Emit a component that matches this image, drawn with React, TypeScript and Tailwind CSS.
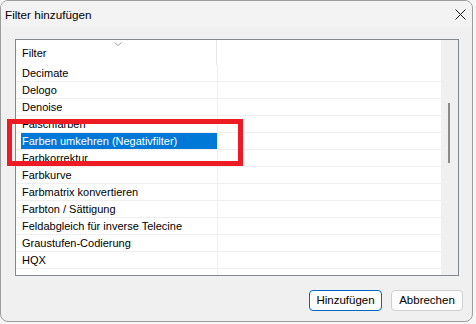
import React from 'react';

const rows = [
  'Decimate',
  'Delogo',
  'Denoise',
  'Falschfarben',
  'Farben umkehren (Negativfilter)',
  'Farbkorrektur',
  'Farbkurve',
  'Farbmatrix konvertieren',
  'Farbton / Sättigung',
  'Feldabgleich für inverse Telecine',
  'Graustufen-Codierung',
  'HQX',
  '',
];

const SELECTED = 4;

export default function App() {
  return (
    <div
      className="relative w-[476px] h-[324px] bg-[#f6f6f6] text-[11px] text-black overflow-hidden"
      style={{ fontFamily: '"Liberation Sans", Arial, sans-serif' }}
    >
      <div className="w-[473px] h-[322px] rounded-[8px] border border-[#9c9c9c] bg-[#f0f0f0] flex flex-col overflow-hidden">
        {/* title bar */}
        <div className="h-[25px] shrink-0 bg-[#f3f3f3] flex items-center justify-between pl-[4px] pr-[6px]">
          <span className="leading-none pt-[2px] text-[11.7px]">Filter hinzufügen</span>
          <svg width="11" height="11" viewBox="0 0 11 11" className="mt-[1px]">
            <path d="M0.5 0.5 L10.5 10.5 M10.5 0.5 L0.5 10.5" stroke="#1a1a1a" strokeWidth="1" />
          </svg>
        </div>

        {/* list */}
        <div className="ml-[14px] mt-[13px] w-[444px] h-[237px] border border-[#828790] bg-white flex">
          <div className="w-[425px] flex flex-col overflow-hidden">
            <div className="h-[25px] shrink-0 flex relative">
              <div className="w-[201px] border-r border-[#e5e5e5] flex items-center pl-[6px] pt-[1px]">Filter</div>
              <svg width="8" height="4" viewBox="0 0 8 4" className="absolute left-[98px] top-[2px]">
                <path d="M0.5 0.5 L4 3.5 L7.5 0.5" fill="none" stroke="#8a8a8a" strokeWidth="0.8" />
              </svg>
            </div>
            {rows.map((r, i) => (
              <div key={i} className="h-[17px] shrink-0 flex border-b border-[#efefef]">
                <div className="w-[202px] border-r border-[#efefef] pl-[5px] flex">
                  <div
                    className={
                      i === SELECTED
                        ? 'bg-[#0078d7] text-white w-full pl-[1px] pt-[1px] leading-[15px] whitespace-nowrap'
                        : 'pl-[1px] pt-[1px] leading-[15px] whitespace-nowrap'
                    }
                  >
                    {r}
                  </div>
                </div>
              </div>
            ))}
          </div>
          <div className="w-[17px] bg-[#f0f0f0] flex justify-center pt-[63px]">
            <div className="w-[2px] h-[60px] bg-[#8b8b8b] ml-[-1px]" />
          </div>
        </div>

        {/* buttons */}
        <div className="flex justify-end gap-[9px] pr-[9px] mt-[14px]">
          <button className="w-[73px] h-[21px] rounded-[4px] border border-[#0067c0] bg-[#fdfdfd] leading-none text-[11.5px]">
            Hinzufügen
          </button>
          <button className="w-[72px] h-[21px] rounded-[4px] border border-[#d0d0d0] bg-[#fdfdfd] leading-none text-[11.5px]">
            Abbrechen
          </button>
        </div>
      </div>

      {/* red annotation */}
      <div className="absolute left-[7px] top-[119px] w-[236px] h-[47px] border-[5px] border-[#ed1c24]" />
    </div>
  );
}
